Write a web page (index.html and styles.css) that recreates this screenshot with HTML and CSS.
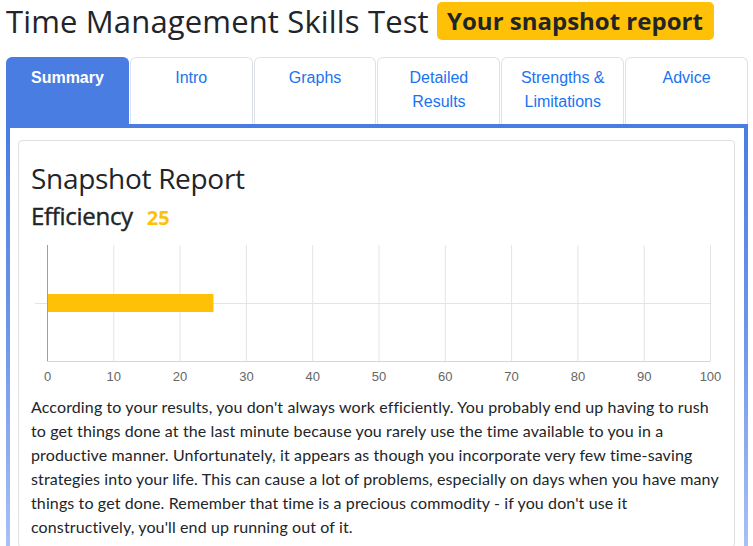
FILE: index.html
```html
<!DOCTYPE html>
<html lang="en">
<head>
<meta charset="utf-8">
<title>Time Management Skills Test</title>
<link rel="stylesheet" href="styles.css">
</head>
<body>
<div class="page">
  <h1 class="title">Time Management Skills Test <span class="badge">Your snapshot report</span></h1>
  <nav class="tabs">
    <a class="tab active">Summary</a>
    <a class="tab">Intro</a>
    <a class="tab">Graphs</a>
    <a class="tab">Detailed Results</a>
    <a class="tab">Strengths &amp; Limitations</a>
    <a class="tab">Advice</a>
  </nav>
  <div class="frame">
    <div class="card">
      <h2 class="card-title">Snapshot Report</h2>
      <h3 class="metric">Efficiency <span class="score">25</span></h3>
      <svg class="chart" width="691" height="150" viewBox="0 0 691 150">
        <g stroke="#e4e4e4" stroke-width="1">
          <line x1="82.8" y1="6" x2="82.8" y2="122"/>
          <line x1="149.1" y1="6" x2="149.1" y2="122"/>
          <line x1="215.4" y1="6" x2="215.4" y2="122"/>
          <line x1="281.7" y1="6" x2="281.7" y2="122"/>
          <line x1="348" y1="6" x2="348" y2="122"/>
          <line x1="414.3" y1="6" x2="414.3" y2="122"/>
          <line x1="480.6" y1="6" x2="480.6" y2="122"/>
          <line x1="546.9" y1="6" x2="546.9" y2="122"/>
          <line x1="613.2" y1="6" x2="613.2" y2="122"/>
          <line x1="679.5" y1="6" x2="679.5" y2="122"/>
          <line x1="4" y1="64.5" x2="679.5" y2="64.5"/>
          <line x1="16" y1="122.5" x2="679.5" y2="122.5" stroke="#d6d6d6"/>
        </g>
        <rect x="16.5" y="55" width="166" height="18" fill="#ffc107"/>
        <line x1="16.5" y1="6" x2="16.5" y2="122" stroke="#9e9e9e"/>
        <g class="ticks" fill="#666" font-size="13" text-anchor="middle">
          <text x="16.5" y="142">0</text>
          <text x="82.8" y="142">10</text>
          <text x="149.1" y="142">20</text>
          <text x="215.4" y="142">30</text>
          <text x="281.7" y="142">40</text>
          <text x="348" y="142">50</text>
          <text x="414.3" y="142">60</text>
          <text x="480.6" y="142">70</text>
          <text x="546.9" y="142">80</text>
          <text x="613.2" y="142">90</text>
          <text x="679.5" y="142">100</text>
        </g>
      </svg>
      <p class="summary">According to your results, you don't always work efficiently. You probably end up having to rush to get things done at the last minute because you rarely use the time available to you in a productive manner. Unfortunately, it appears as though you incorporate very few time-saving strategies into your life. This can cause a lot of problems, especially on days when you have many things to get done. Remember that time is a precious commodity - if you don't use it constructively, you'll end up running out of it.</p>
    </div>
  </div>
</div>
</body>
</html>
```
FILE: styles.css
```css
* { box-sizing: border-box; }
html, body { margin: 0; padding: 0; background: #fff; }
body {
  font-family: "Open Sans", "Noto Sans", sans-serif;
  color: #212529;
  overflow: hidden;
}
.page { padding: 0 5px 0 6px; }
.title {
  margin: 0;
  padding-top: 2px;
  height: 57px;
  font-size: 31px;
  font-weight: 400;
  line-height: 38px;
  letter-spacing: 0.15px;
  white-space: nowrap;
}
.badge {
  display: inline-block;
  margin-left: 0;
  padding: 0 11px 0 10px;
  background: #ffc107;
  border-radius: 5px;
  font-size: 24px;
  font-weight: 700;
  line-height: 38px;
  letter-spacing: 0;
  vertical-align: top;
}
.tabs {
  display: flex;
  gap: 1px;
}
.tab {
  flex: 1 1 0;
  display: block;
  padding: 8px 6px 10px;
  border: 1px solid #dee2e6;
  border-bottom: none;
  border-radius: 6px 6px 0 0;
  font-family: "Liberation Sans", Arial, sans-serif;
  font-size: 16px;
  line-height: 24px;
  text-align: center;
  color: #1a73f0;
  text-decoration: none;
}
.tab.active {
  background: #4a7de2;
  border-color: #4a7de2;
  color: #fff;
  font-weight: 700;
}
.frame {
  border: 4px solid #4a7de2;
  border-image: linear-gradient(to bottom, #4a7de2, #6f97ea 50%, #a9c1f6) 1;
  padding: 12px 9px 0 8px;
  height: 430px;
}
.card {
  border: 1px solid #dfdfdf;
  border-radius: 4px;
  padding: 16px 12px 8px;
}
.card-title {
  margin: 0;
  font-size: 28px;
  font-weight: 400;
  line-height: 42px;
  letter-spacing: -0.3px;
}
.metric {
  margin: 0;
  font-size: 24px;
  font-weight: 400;
  line-height: 34px;
  letter-spacing: -0.3px;
  -webkit-text-stroke: 0.4px currentColor;
}
.score {
  margin-left: 8px;
  color: #ffc107;
  font-size: 20px;
  font-weight: 700;
  letter-spacing: 0;
  -webkit-text-stroke: 0;
}
.chart {
  display: block;
  margin-top: 4px;
}
.ticks { font-family: "Liberation Sans", Arial, sans-serif; }
.summary {
  margin: 6px 0 0;
  font-family: Lato, "Open Sans", sans-serif;
  font-size: 16px;
  line-height: 24px;
  letter-spacing: 0.12px;
}
```
